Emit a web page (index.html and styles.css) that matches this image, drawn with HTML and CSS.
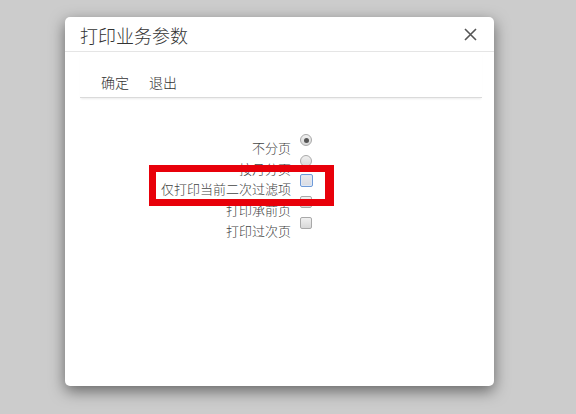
FILE: index.html
```html
<!DOCTYPE html>
<html lang="zh">
<head>
<meta charset="utf-8">
<title>打印业务参数</title>
<link rel="stylesheet" href="styles.css">
</head>
<body>
<div class="dialog">
  <div class="dialog-header">
    <span class="dialog-title">打印业务参数</span>
    <svg class="close" width="13" height="13" viewBox="0 0 13 13"><path d="M1 1 L12 12 M12 1 L1 12" stroke="#555" stroke-width="1.6" fill="none"/></svg>
  </div>
  <div class="toolbar">
    <span class="tool-btn">确定</span>
    <span class="tool-btn">退出</span>
  </div>
  <div class="options">
    <span class="opt-label">不分页</span><span class="ctl radio checked"></span>
    <span class="opt-label">按月分页</span><span class="ctl radio"></span>
    <span class="opt-label">仅打印当前二次过滤项</span><span class="ctl box focus"></span>
    <span class="opt-label">打印承前页</span><span class="ctl box"></span>
    <span class="opt-label">打印过次页</span><span class="ctl box"></span>
  </div>
</div>
<div class="highlight"></div>
</body>
</html>
```

FILE: styles.css
```css
html, body {
  margin: 0;
  padding: 0;
}
body {
  background: #cccccc;
  width: 576px;
  height: 414px;
  overflow: hidden;
  position: relative;
  font-family: "Noto Sans CJK SC", "Microsoft YaHei", sans-serif;
  font-weight: 300;
  color: #333;
}
.dialog {
  margin: 17px 0 0 65px;
  width: 429px;
  height: 369px;
  box-sizing: border-box;
  background: #fff;
  border-radius: 5px;
  box-shadow: 0 5px 15px rgba(0, 0, 0, 0.5);
  display: flex;
  flex-direction: column;
}
.dialog-header {
  height: 34px;
  border-bottom: 1px solid #e5e5e5;
  display: flex;
  align-items: center;
  justify-content: space-between;
  padding: 0 17px 0 15px;
}
.dialog-title {
  font-size: 18px;
  line-height: 24px;
  color: #333;
  margin-top: 2px;
}
.close {
  display: block;
}
.toolbar {
  margin: 0 12px 0 15px;
  padding: 22px 0 7px 21px;
  display: flex;
  gap: 20px;
  border-bottom: 1px solid #dadada;
  box-shadow: 0 2px 2px -1px rgba(0, 0, 0, 0.08);
}
.tool-btn {
  font-size: 14px;
  line-height: 16px;
  color: #333;
}
.options {
  margin-top: 36px;
  display: grid;
  grid-template-columns: 226px 12px;
  grid-auto-rows: 20.7px;
  column-gap: 9px;
  align-items: start;
}
.opt-label {
  text-align: right;
  font-size: 13px;
  line-height: 14px;
  margin-top: 7px;
  color: #444;
  white-space: nowrap;
}
.ctl {
  width: 12px;
  height: 12px;
  box-sizing: border-box;
  border: 1px solid #a9a9a9;
  background: linear-gradient(#f0f0f0, #d8d8d8);
}
.radio {
  border-radius: 50%;
  position: relative;
}
.radio.checked::after {
  content: "";
  position: absolute;
  left: 2.5px;
  top: 2.5px;
  width: 5px;
  height: 5px;
  border-radius: 50%;
  background: #555;
}
.box {
  border-radius: 2px;
}
.box.focus {
  width: 13px;
  height: 13px;
  margin-top: -1px;
  border: 1px solid #6f9ad8;
  background: linear-gradient(#e9eaee, #d9dbe2);
  box-shadow: inset 0 0 0 1px #dfe8f5;
}
.highlight {
  position: absolute;
  left: 149px;
  top: 165px;
  width: 185px;
  height: 41px;
  box-sizing: border-box;
  border: 7px solid #e8000a;
  border-right-width: 9px;
}
```
